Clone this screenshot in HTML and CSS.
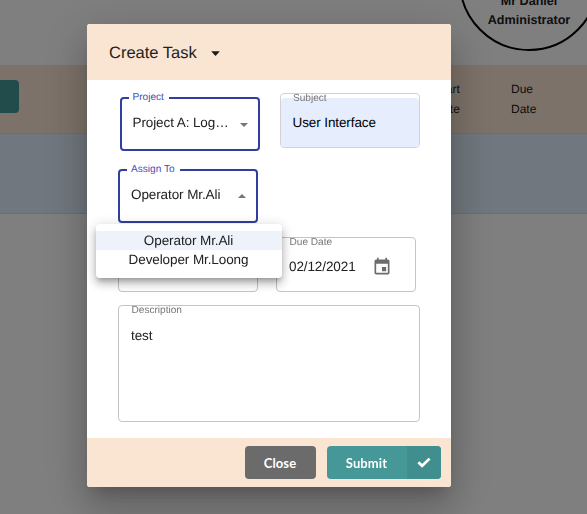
FILE: index.html
```html
<!DOCTYPE html>
<html lang="en">
<head>
<meta charset="utf-8">
<title>Create Task</title>
<link rel="stylesheet" href="styles.css">
</head>
<body>
<div class="page">
  <header class="topbar"><div class="avatar"><span>Mr Daniel</span><span>Administrator</span></div></header>
  <div class="table-head">
    <button class="add" aria-label="Add"></button>
    <span class="th">Start Date</span>
    <span class="th">Due Date</span>
  </div>
  <div class="table-row"></div>
</div>
<div class="backdrop">
  <section class="dialog">
    <header class="dialog-head"><h1>Create Task</h1><svg width="9" height="5" viewBox="0 0 9 5"><path d="M.8.2h7.4q.7 0 .2.6L5 4.5q-.5.5-1 0L.6.8Q.1.2.8.2z" fill="#1b1b1b"/></svg></header>
    <div class="dialog-body">
      <div class="row row-1">
        <div class="field focused project"><label>Project</label><span class="value">Project A: Log…</span><svg class="arrow" width="8" height="4" viewBox="0 0 8 4"><path d="M0 0h8L4 4z"/></svg></div>
        <div class="field subject"><label>Subject</label><div class="autofill"><span class="value">User Interface</span></div></div>
      </div>
      <div class="row row-2">
        <div class="field focused assign"><label>Assign To</label><span class="value">Operator Mr.Ali</span><svg class="arrow" width="8" height="4" viewBox="0 0 8 4"><path d="M0 4h8L4 0z"/></svg>
          <ul class="menu"><li class="selected">Operator Mr.Ali</li><li>Developer Mr.Loong</li></ul>
        </div>
      </div>
      <div class="row row-3">
        <div class="field start"></div>
        <div class="field due"><label>Due Date</label><span class="value">02/12/2021</span>
          <svg class="calendar" width="20" height="20" viewBox="0 0 24 24"><path d="M17 12h-5v5h5v-5zM16 1v2H8V1H6v2H5c-1.11 0-1.99.9-1.99 2L3 19c0 1.1.89 2 2 2h14c1.1 0 2-.9 2-2V5c0-1.1-.9-2-2-2h-1V1h-2zm3 18H5V8h14v11z" fill="#6c6c6c"/></svg>
        </div>
      </div>
      <div class="field description"><label>Description</label><span class="value">test</span></div>
    </div>
    <footer class="dialog-foot">
      <button class="btn close">Close</button>
      <button class="btn submit"><span class="btn-text">Submit</span><span class="btn-icon"><svg width="14" height="11" viewBox="0 0 14 11"><path d="M1.4 5.2l3.7 3.6L12.6 1.6" fill="none" stroke="#fff" stroke-width="2.7"/></svg></span></button>
    </footer>
  </section>
</div>
</body>
</html>
```

FILE: styles.css
```css
* { box-sizing: border-box; }
body { margin: 0; height: 514px; overflow: hidden; background: #fff; color: #212121; font-family: "Liberation Sans", Arial, sans-serif; text-rendering: geometricPrecision; }
h1, ul { margin: 0; padding: 0; }
button { border: 0; padding: 0; font: inherit; }
svg { display: block; flex: none; }

.page { overflow: hidden; }
.topbar { height: 65px; display: flex; justify-content: flex-end; }
.avatar { width: 140px; height: 140px; margin: -89px -12px 0 0; border: 2px solid #000; border-radius: 50%; display: flex; flex-direction: column; align-items: center; padding-top: 79px; font-size: 12.6px; font-weight: 700; line-height: 19px; }
.table-head { height: 69px; background: #fae5d3; border-bottom: 1px solid #e6d8cc; display: grid; grid-template-columns: 434.5px 76.5px 76px; align-items: center; }
.add { width: 19px; height: 33px; margin-top: -5px; background: #459798; border-radius: 0 4px 4px 0; }
.th { width: 30px; font-size: 12px; line-height: 20px; }
.table-row { height: 80px; background: #e1effc; border-bottom: 1px solid #d2dde6; }

.backdrop { position: fixed; inset: 0; background: rgba(0, 0, 0, .5); padding: 24px 0 0 87px; }
.dialog { width: 364px; height: 463px; border-radius: 3px; background: #fff; display: flex; flex-direction: column; box-shadow: 0 11px 15px -7px rgba(0,0,0,.2), 0 24px 38px 3px rgba(0,0,0,.14), 0 9px 46px 8px rgba(0,0,0,.12); }
.dialog-head { height: 56px; flex: none; background: #fae5d3; border-radius: 3px 3px 0 0; display: flex; align-items: center; gap: 14px; padding-left: 22px; }
.dialog-head h1 { padding-top: 2px; font-size: 16.5px; font-weight: 400; }
.dialog-head svg { margin-top: 2px; }
.dialog-body { flex: 1; padding: 13px 31px 0; }

.row { display: flex; align-items: flex-start; }
.row-1 { height: 76px; gap: 20px; padding-left: 1.5px; }
.row-2 { height: 68px; }
.row-3 { height: 68px; gap: 18px; }
.field { position: relative; width: 140px; height: 55px; border: 1px solid #c4c4c4; border-radius: 4px; display: flex; align-items: center; padding: 0 12px; }
.field label { position: absolute; left: 12.5px; top: -1px; font-size: 10.1px; line-height: 12px; color: #757575; white-space: nowrap; }
.focused { height: 54px; border: 2px solid #303f9f; padding: 0 11px; }
.focused label { left: 7px; top: -7px; padding: 0 5px 0 4px; background: #fff; color: #3f4fb5; }
.value { font-size: 13.5px; line-height: 18px; letter-spacing: -.1px; white-space: nowrap; }
.arrow { position: absolute; right: 10px; top: 24px; fill: #757575; }
.assign .arrow { top: 23px; }
.project { margin-top: 4px; }
.project .value, .assign .value { margin-top: -3px; }
.subject { padding: 0; border-color: #d2d2d6; }
.subject label { z-index: 1; }
.autofill { align-self: flex-end; width: 100%; height: 49px; padding: 16px 12px 0; background: #e6edfd; border-radius: 4px; color: #000; line-height: 18px; }
.subject .value { display: block; letter-spacing: -.1px; }
.calendar { margin-left: 16px; }
.due .value { margin-top: 5px; letter-spacing: -.1px; }
.due .calendar { margin-top: 4px; }
.description { width: 302px; height: 117px; align-items: flex-start; padding-top: 21px; }

.menu { position: absolute; z-index: 2; left: -24.5px; top: 52.5px; width: 186px; height: 54px; padding-top: 7px; list-style: none; background: #fff; border-radius: 4px; text-align: center; font-size: 13.5px; line-height: 19px; letter-spacing: -.1px; box-shadow: 0 4px 5px -2px rgba(0,0,0,.24), 0 6px 9px 1px rgba(0,0,0,.16), 0 2px 12px 2px rgba(0,0,0,.12); }
.selected { background: #edf2fb; }

.dialog-foot { height: 49px; flex: none; background: #fae5d3; border-radius: 0 0 3px 3px; display: flex; justify-content: flex-end; gap: 11px; padding: 8px 10.5px 0 0; }
.btn { height: 33px; border-radius: 4px; color: #fff; font-family: Lato, sans-serif; font-size: 13px; font-weight: 700; letter-spacing: .1px; }
.close { width: 71px; background: #6b6b6b; }
.submit { width: 114px; background: #459798; display: flex; overflow: hidden; }
.btn-text { width: 80px; line-height: 34px; }
.btn-icon { width: 34px; height: 33px; display: grid; place-items: center; background: #418e8f; }
```
